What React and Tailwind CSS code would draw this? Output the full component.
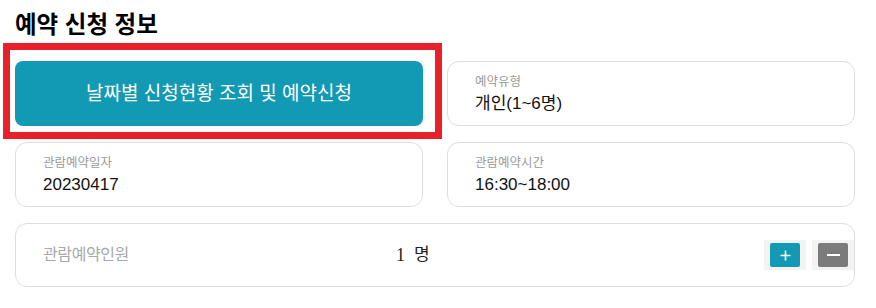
import React from "react";

const KR = { fontFamily: '"Liberation Sans", "Noto Sans CJK KR", sans-serif' };

function Card({ label, value }) {
  return (
    <div className="h-[65px] rounded-[12px] border border-[#dedede] bg-white flex flex-col justify-center px-[27px]">
      <div className="text-[12.5px] leading-[16px] text-[#9a9a9a] mt-[2px]">{label}</div>
      <div className="text-[17px] leading-[22px] text-[#111] mt-[3px]">{value}</div>
    </div>
  );
}

export default function App() {
  return (
    <div className="w-[876px] h-[308px] bg-white overflow-hidden pl-[15px] pr-[21px]" style={KR}>
      <div className="h-[48px] pt-[10px]">
        <h2 className="text-[23.5px] leading-[30px] font-bold text-black">예약 신청 정보</h2>
      </div>
      <div className="grid grid-cols-2 gap-x-[24px] gap-y-[16px] mt-[13px]">
        <div className="relative h-[65px]">
          <div className="absolute left-[-12px] right-[-19px] top-[-18px] bottom-[-13px] border-[7px] border-[#e8202a]" />
          <button className="relative w-full h-full rounded-[8px] bg-[#1299b4] text-white text-[19px] leading-none">
            날짜별 신청현황 조회 및 예약신청
          </button>
        </div>
        <Card label="예약유형" value="개인(1~6명)" />
        <Card label="관람예약일자" value="20230417" />
        <Card label="관람예약시간" value="16:30~18:00" />
        <div className="col-span-2 h-[64px] rounded-[12px] border border-[#dedede] bg-white flex items-center pl-[27px]">
          <div className="w-[353px] text-[16px] text-[#a8a8a8] tracking-[-0.4px]">관람예약인원</div>
          <div className="text-[17px] text-[#222] flex items-center gap-[9px]">
            <span style={{ fontFamily: '"Liberation Serif", serif' }} className="text-[18px]">1</span>
            <span>명</span>
          </div>
          <div className="flex-1" />
          <div className="flex items-center gap-[6px]">
            <div className="w-[42px] h-[30px] bg-[#f3f3f3] flex items-center justify-center">
              <div className="w-[30px] h-[24px] rounded-[2px] bg-[#1299b4] flex items-center justify-center">
                <svg width="11" height="11" viewBox="0 0 11 11">
                  <path d="M5.5 0.5v10M0.5 5.5h10" stroke="#fff" strokeWidth="1.6" />
                </svg>
              </div>
            </div>
            <div className="w-[42px] h-[30px] bg-[#f3f3f3] flex items-center justify-center">
              <div className="w-[30px] h-[24px] rounded-[2px] bg-[#7b7b7b] flex items-center justify-center">
                <svg width="13" height="4" viewBox="0 0 13 4">
                  <path d="M0 2h13" stroke="#fff" strokeWidth="2" />
                </svg>
              </div>
            </div>
          </div>
        </div>
      </div>
    </div>
  );
}
